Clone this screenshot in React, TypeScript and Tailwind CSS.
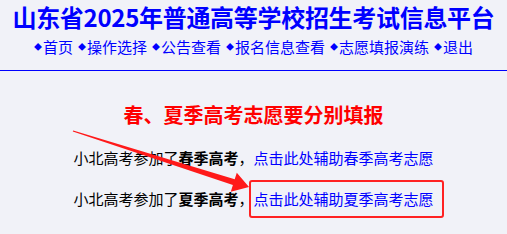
const navItems = ['首页', '操作选择', '公告查看', '报名信息查看', '志愿填报演练', '退出']

function Row({ season, highlight }: { season: string, highlight?: boolean }) {
  return (
    <div className="text-[15px] leading-[24px] text-black text-center">
      <span>小北高考参加了</span>
      <span className="font-bold">{season}季高考</span>
      <span>，</span>
      <span className="relative">
        <a href="#" className="text-[#0000ff]">点击此处辅助{season}季高考志愿</a>
        {highlight && (
          <span className="absolute left-[-5px] right-[-10px] top-[-8px] bottom-[-9px] border-2 border-[#ff2222] rounded-[3px] pointer-events-none" />
        )}
      </span>
    </div>
  )
}

export default function App() {
  return (
    <div className="relative w-[507px] h-[234px] overflow-hidden bg-[#f1f2f8]" style={{ fontFamily: '"Noto Sans CJK SC", "Noto Sans", sans-serif' }}>
      <div className="pb-[11px]">
        <h1 className="text-[24px] leading-[34px] font-bold text-[#0000ff] text-center whitespace-nowrap tracking-[-0.3px]">山东省2025年普通高等学校招生考试信息平台</h1>
        <div className="flex justify-center gap-[5px] text-[15px] leading-[24px] text-[#0000ff] mt-[1px]">
          {navItems.map(item => (
            <a key={item} href="#" className="flex items-center">
              <span className="text-[8px] mr-[1px]">◆</span>{item}
            </a>
          ))}
        </div>
      </div>
      <div className="h-[1px] bg-[#0000ff]" />
      <h2 className="mt-[30px] text-[20px] leading-[28px] font-bold text-[#ff0000] text-center">春、夏季高考志愿要分别填报</h2>
      <div className="mt-[17px] flex flex-col gap-[17px]">
        <Row season="春" />
        <Row season="夏" highlight />
      </div>
      <svg className="absolute left-0 top-0 pointer-events-none" width="507" height="234">
        <polygon points="73.2,130.5 234.7,179.3 236.8,172.7 249,187 230.8,191.7 232.9,185.1 72.8,131.5" fill="#ff1a1a" />
      </svg>
    </div>
  )
}
